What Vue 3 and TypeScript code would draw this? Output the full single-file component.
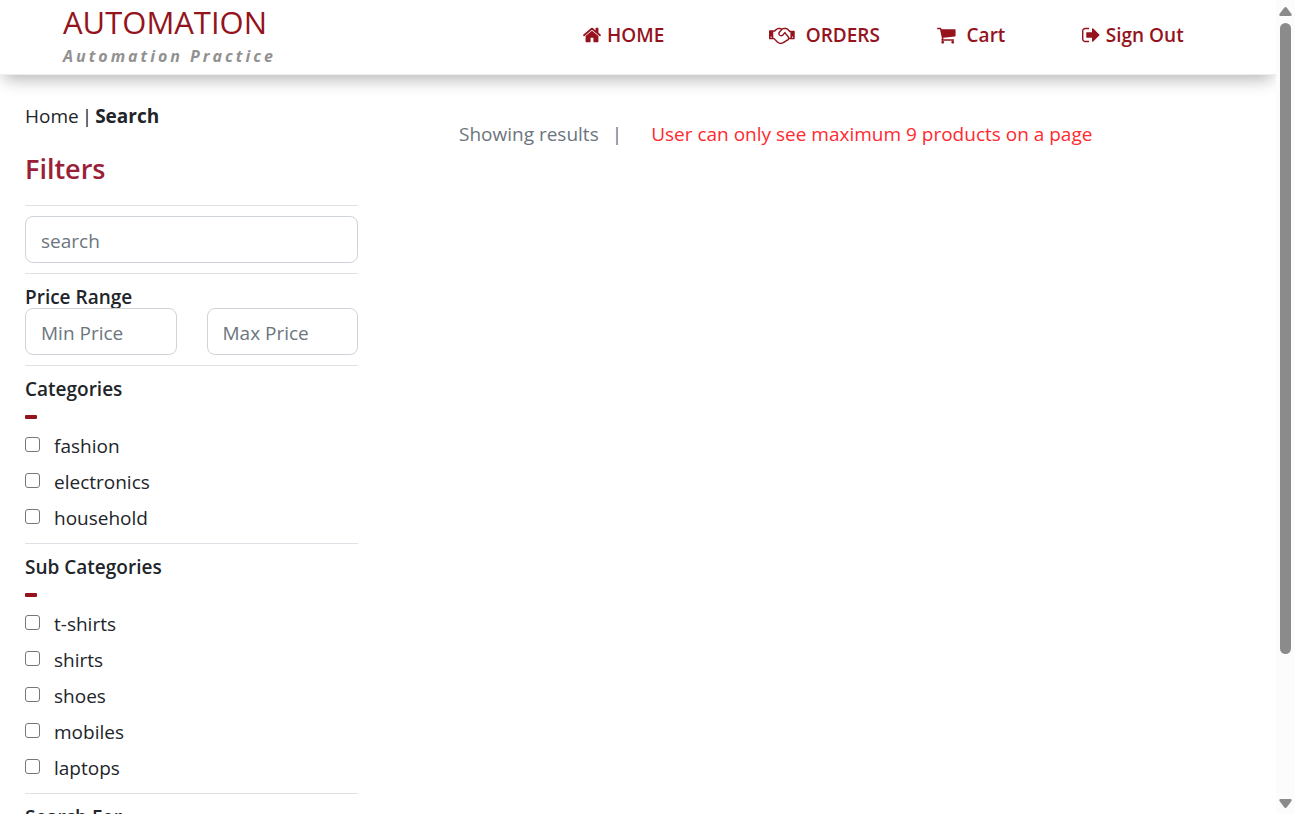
<script setup lang="ts">
import { reactive, ref } from 'vue'

interface NavItem {
  label: string
  icon: string
  viewBox: string
  path: string
}

interface FilterGroup {
  title: string
  options: string[]
}

const navItems: NavItem[] = [
  {
    label: 'HOME',
    icon: 'home',
    viewBox: '89 0 1614 1792',
    path: 'M1472 992v480q0 26-19 45t-45 19h-384v-384h-256v384h-384q-26 0-45-19t-19-45v-480q0-1 .5-3t.5-3l575-474 575 474q1 2 1 6zm223-69l-62 74q-8 9-21 11h-3q-13 0-21-7l-692-577-692 577q-12 8-24 7-13-2-21-11l-62-74q-8-10-7-23.5t11-21.5l719-599q32-26 76-26t76 26l244 204v-195q0-14 9-23t23-9h192q14 0 23 9t9 23v408l219 182q10 8 11 21.5t-7 23.5z',
  },
  {
    label: 'ORDERS',
    icon: 'orders',
    viewBox: '0 0 2304 1792',
    path: 'M192 1152q40 0 56-32t0-64-56-32-56 32 0 64 56 32zM1665 1094q-10-13-38.5-50t-41.5-54-38-49-42.5-53-40.5-47-45-49l-125 140q-83 94-208.5 92t-205.5-98q-57-69-56.5-158t58.5-157l177-206q-22-11-51-16.5t-47.5-6-56.5.5-49 1q-92 0-158 66l-158 158h-155v544q5 0 21-.5t22 0 19.5 2 20.5 4.5 17.5 8.5 18.5 13.5l297 292q115 111 227 111 78 0 125-47 57 20 112.5-8t72.5-85q74 6 127-44 20-18 36-45.5t14-50.5q10 10 43 10 43 0 77-21t49.5-53 12-71.5-30.5-73.5zM1824 1152h96v-512h-93l-157-180q-66-76-169-76h-167q-89 0-146 67l-209 243q-28 33-28 75t27 75q43 51 110 52t111-49l193-218q25-23 53.5-21.5t47 27 8.5 56.5q16 19 56 63t60 68q29 36 82.5 105.5t64.5 84.5q52 66 60 140zM2112 1152q40 0 56-32t0-64-56-32-56 32 0 64 56 32zM2304 576v640q0 26-19 45t-45 19h-434q-27 65-82 106.5t-125 51.5q-33 48-80.5 81.5t-102.5 45.5q-42 53-104.5 81.5t-128.5 24.5q-60 34-126 39.5t-127.5-14-117-53.5-103.5-81l-287-282h-358q-26 0-45-19t-19-45v-672q0-26 19-45t45-19h421q14-14 47-48t47.5-48 44-40 50.5-37.5 51-25.5 62-19.5 68-5.5h117q99 0 181 56 82-56 181-56h167q35 0 67 6t56.5 14.5 51.5 26.5 44.5 31 43 39.5 39 41 41 44.5 41.5 45h355q26 0 45 19t19 45z',
  },
  {
    label: 'Cart',
    icon: 'cart',
    viewBox: '64 0 1664 1792',
    path: 'M704 1536q0 52-38 90t-90 38-90-38-38-90 38-90 90-38 90 38 38 90zm896 0q0 52-38 90t-90 38-90-38-38-90 38-90 90-38 90 38 38 90zm128-1088v512q0 24-16.5 42.5t-40.5 21.5l-1044 122q13 60 13 70 0 16-24 64h920q26 0 45 19t19 45-19 45-45 19h-1024q-26 0-45-19t-19-45q0-11 8-31.5t16-36 21.5-40 15.5-29.5l-177-823h-204q-26 0-45-19t-19-45 19-45 45-19h256q16 0 28.5 6.5t19.5 15.5 13 24.5 8 26 5.5 29.5 4.5 26h1201q26 0 45 19t19 45z',
  },
  {
    label: 'Sign Out',
    icon: 'signout',
    viewBox: '64 0 1600 1792',
    path: 'M704 1440q0 4 1 20t.5 26.5-3 23.5-10 19.5-20.5 6.5h-320q-119 0-203.5-84.5t-84.5-203.5v-704q0-119 84.5-203.5t203.5-84.5h320q13 0 22.5 9.5t9.5 22.5q0 4 1 20t.5 26.5-3 23.5-10 19.5-20.5 6.5h-320q-66 0-113 47t-47 113v704q0 66 47 113t113 47h312l11.5 1 11.5 3 8 5.5 7 9 2 13.5zm928-544q0 26-19 45l-544 544q-19 19-45 19t-45-19-19-45v-288h-448q-26 0-45-19t-19-45v-384q0-26 19-45t45-19h448v-288q0-26 19-45t45-19 45 19l544 544q19 19 19 45z',
  },
]

const groups: FilterGroup[] = [
  { title: 'Categories', options: ['fashion', 'electronics', 'household'] },
  { title: 'Sub Categories', options: ['t-shirts', 'shirts', 'shoes', 'mobiles', 'laptops'] },
]

const search = ref('')
const minPrice = ref('')
const maxPrice = ref('')
const selected = ref<string[]>([])
const open = reactive<Record<string, boolean>>({ 'Categories': true, 'Sub Categories': true })

function toggle(title: string): void {
  open[title] = !open[title]
}
</script>

<template>
  <div class="shell">
    <div class="page">
      <header class="topbar">
        <div class="brand">
          <div class="brand-name">AUTOMATION</div>
          <div class="brand-tag">Automation Practice</div>
        </div>
        <nav class="nav" aria-label="Main">
          <a v-for="item in navItems" :key="item.label" href="#" :class="['nav-link', item.icon]">
            <svg class="nav-icon" :viewBox="item.viewBox" aria-hidden="true"><path :d="item.path" /></svg>
            <span>{{ item.label }}</span>
          </a>
        </nav>
      </header>

      <div class="content">
        <aside class="sidebar">
          <p class="crumbs"><a href="#">Home</a><span>|</span><strong>Search</strong></p>
          <h1 class="title">Filters</h1>

          <section class="block">
            <input v-model="search" class="field" type="text" placeholder="search" aria-label="search" />
          </section>

          <section class="block">
            <h2 class="heading">Price Range</h2>
            <div class="prices">
              <input v-model="minPrice" class="field" type="text" placeholder="Min Price" aria-label="Min Price" />
              <input v-model="maxPrice" class="field" type="text" placeholder="Max Price" aria-label="Max Price" />
            </div>
          </section>

          <section v-for="group in groups" :key="group.title" class="block">
            <h2 class="heading">{{ group.title }}</h2>
            <button
              class="toggle"
              type="button"
              :aria-expanded="open[group.title]"
              :aria-label="group.title"
              @click="toggle(group.title)"
            >
              <svg class="minus" viewBox="0 0 12 4" aria-hidden="true"><rect width="12" height="4" rx="1" /></svg>
            </button>
            <ul v-if="open[group.title]" class="options">
              <li v-for="option in group.options" :key="option">
                <label class="option">
                  <input v-model="selected" class="check" type="checkbox" :value="option" />
                  <span>{{ option }}</span>
                </label>
              </li>
            </ul>
          </section>

          <section class="block">
            <h2 class="heading">Search For</h2>
          </section>
        </aside>

        <main class="results">
          <span class="muted">Showing results</span>
          <span class="muted">|</span>
          <span class="notice">User can only see maximum 9 products on a page</span>
        </main>
      </div>
    </div>

    <div class="scrollbar" aria-hidden="true">
      <svg class="arrow" viewBox="0 0 13 9"><path d="M6.5 0Q7.3 0 8 .9L12.5 7Q13.2 9 11.5 9H1.5Q-.2 9 .5 7L5 .9Q5.7 0 6.5 0Z" /></svg>
      <div class="track"><div class="thumb"></div></div>
      <svg class="arrow" viewBox="0 0 13 9"><path d="M6.5 9Q7.3 9 8 8.1L12.5 2Q13.2 0 11.5 0H1.5Q-.2 0 .5 2L5 8.1Q5.7 9 6.5 9Z" /></svg>
    </div>
  </div>
</template>

<style>
body {
  margin: 0;
  background: #fff;
}
</style>

<style scoped>
.shell {
  display: grid;
  grid-template-columns: minmax(0, 1fr) 19px;
  height: 100vh;
  overflow: hidden;
  color: #212529;
  font-family: "Open Sans", "Noto Sans", sans-serif;
  font-size: 19px;
  line-height: 30px;
}
.shell *, .shell *::before {
  box-sizing: border-box;
}
.page {
  overflow: hidden;
}
.topbar {
  display: flex;
  height: 75px;
  padding-left: 63px;
  border-bottom: 1px solid #eee;
  box-shadow: 0 8px 16px -4px rgba(0, 0, 0, 0.3);
}
.brand {
  flex: 0 0 520px;
  padding-top: 3px;
}
.brand-name {
  color: #94131d;
  font-size: 31px;
  line-height: 38px;
}
.brand-tag {
  color: #919191;
  font-size: 16px;
  font-style: italic;
  font-weight: 700;
  line-height: 30px;
  letter-spacing: 3px;
}
.nav {
  flex: 1;
  display: grid;
  grid-template-columns: 186fr 168fr 145fr 194fr;
  align-items: start;
  padding-top: 20px;
}
.nav-link {
  display: flex;
  align-items: center;
  gap: 6px;
  color: #94131d;
  font-weight: 600;
  text-decoration: none;
  white-space: nowrap;
}
.nav-icon {
  height: 20px;
  fill: currentColor;
}
.orders, .cart {
  gap: 11px;
}
.content {
  display: flex;
  padding: 26px 25px 0;
}
.sidebar {
  flex: 0 0 333px;
}
.crumbs {
  display: flex;
  gap: 3px;
  margin: 0;
}
.crumbs a {
  color: inherit;
  text-decoration: none;
}
.title {
  margin: 21px 0 19px;
  color: #9a2038;
  font-size: 27px;
  font-weight: 600;
  line-height: 34px;
}
.block {
  padding: 10px 0;
  border-top: 1px solid #dee2e6;
}
.block:has(.options) {
  padding-bottom: 8px;
}
.heading {
  margin: 0;
  padding-top: 3px;
  font-size: 19px;
  font-weight: 600;
  line-height: 21px;
}
.prices {
  display: grid;
  grid-template-columns: 1fr 1fr;
  gap: 30px;
}
.field {
  display: block;
  width: 100%;
  height: 47px;
  padding: 2px 15px 0;
  border: 1px solid #ced4da;
  border-radius: 8px;
  background: #fff;
  color: #212529;
  font: inherit;
}
.field::placeholder {
  color: #6c757d;
  opacity: 1;
}
.toggle {
  display: block;
  height: 27px;
  padding: 7px 0 0;
  border: 0;
  background: none;
}
.minus {
  display: block;
  width: 12px;
  height: 4px;
  fill: #94131d;
}
.options {
  margin: 0;
  padding: 0;
  list-style: none;
}
.option {
  display: flex;
  gap: 14px;
  padding: 4px 0 2px;
}
.check {
  appearance: none;
  width: 15px;
  height: 15px;
  margin: 6px 0 0;
  border: 1px solid #767676;
  border-radius: 3px;
  background: #fff;
}
.check:checked {
  background: #94131d;
}
.results {
  display: flex;
  align-items: baseline;
  padding: 18px 0 0 101px;
  white-space: nowrap;
}
.muted {
  margin-right: 13px;
  color: #6c757d;
}
.notice {
  margin-left: 16px;
  color: #ff2a2f;
}
.scrollbar {
  display: flex;
  flex-direction: column;
  align-items: center;
  gap: 7px;
  padding: 7px 0 6px;
  background: #fcfcfc;
}
.arrow {
  width: 13px;
  height: 9px;
  fill: #8b8b8b;
}
.track {
  flex: 1;
  width: 11px;
}
.thumb {
  height: 82%;
  border-radius: 6px;
  background: #8b8b8b;
}
</style>
